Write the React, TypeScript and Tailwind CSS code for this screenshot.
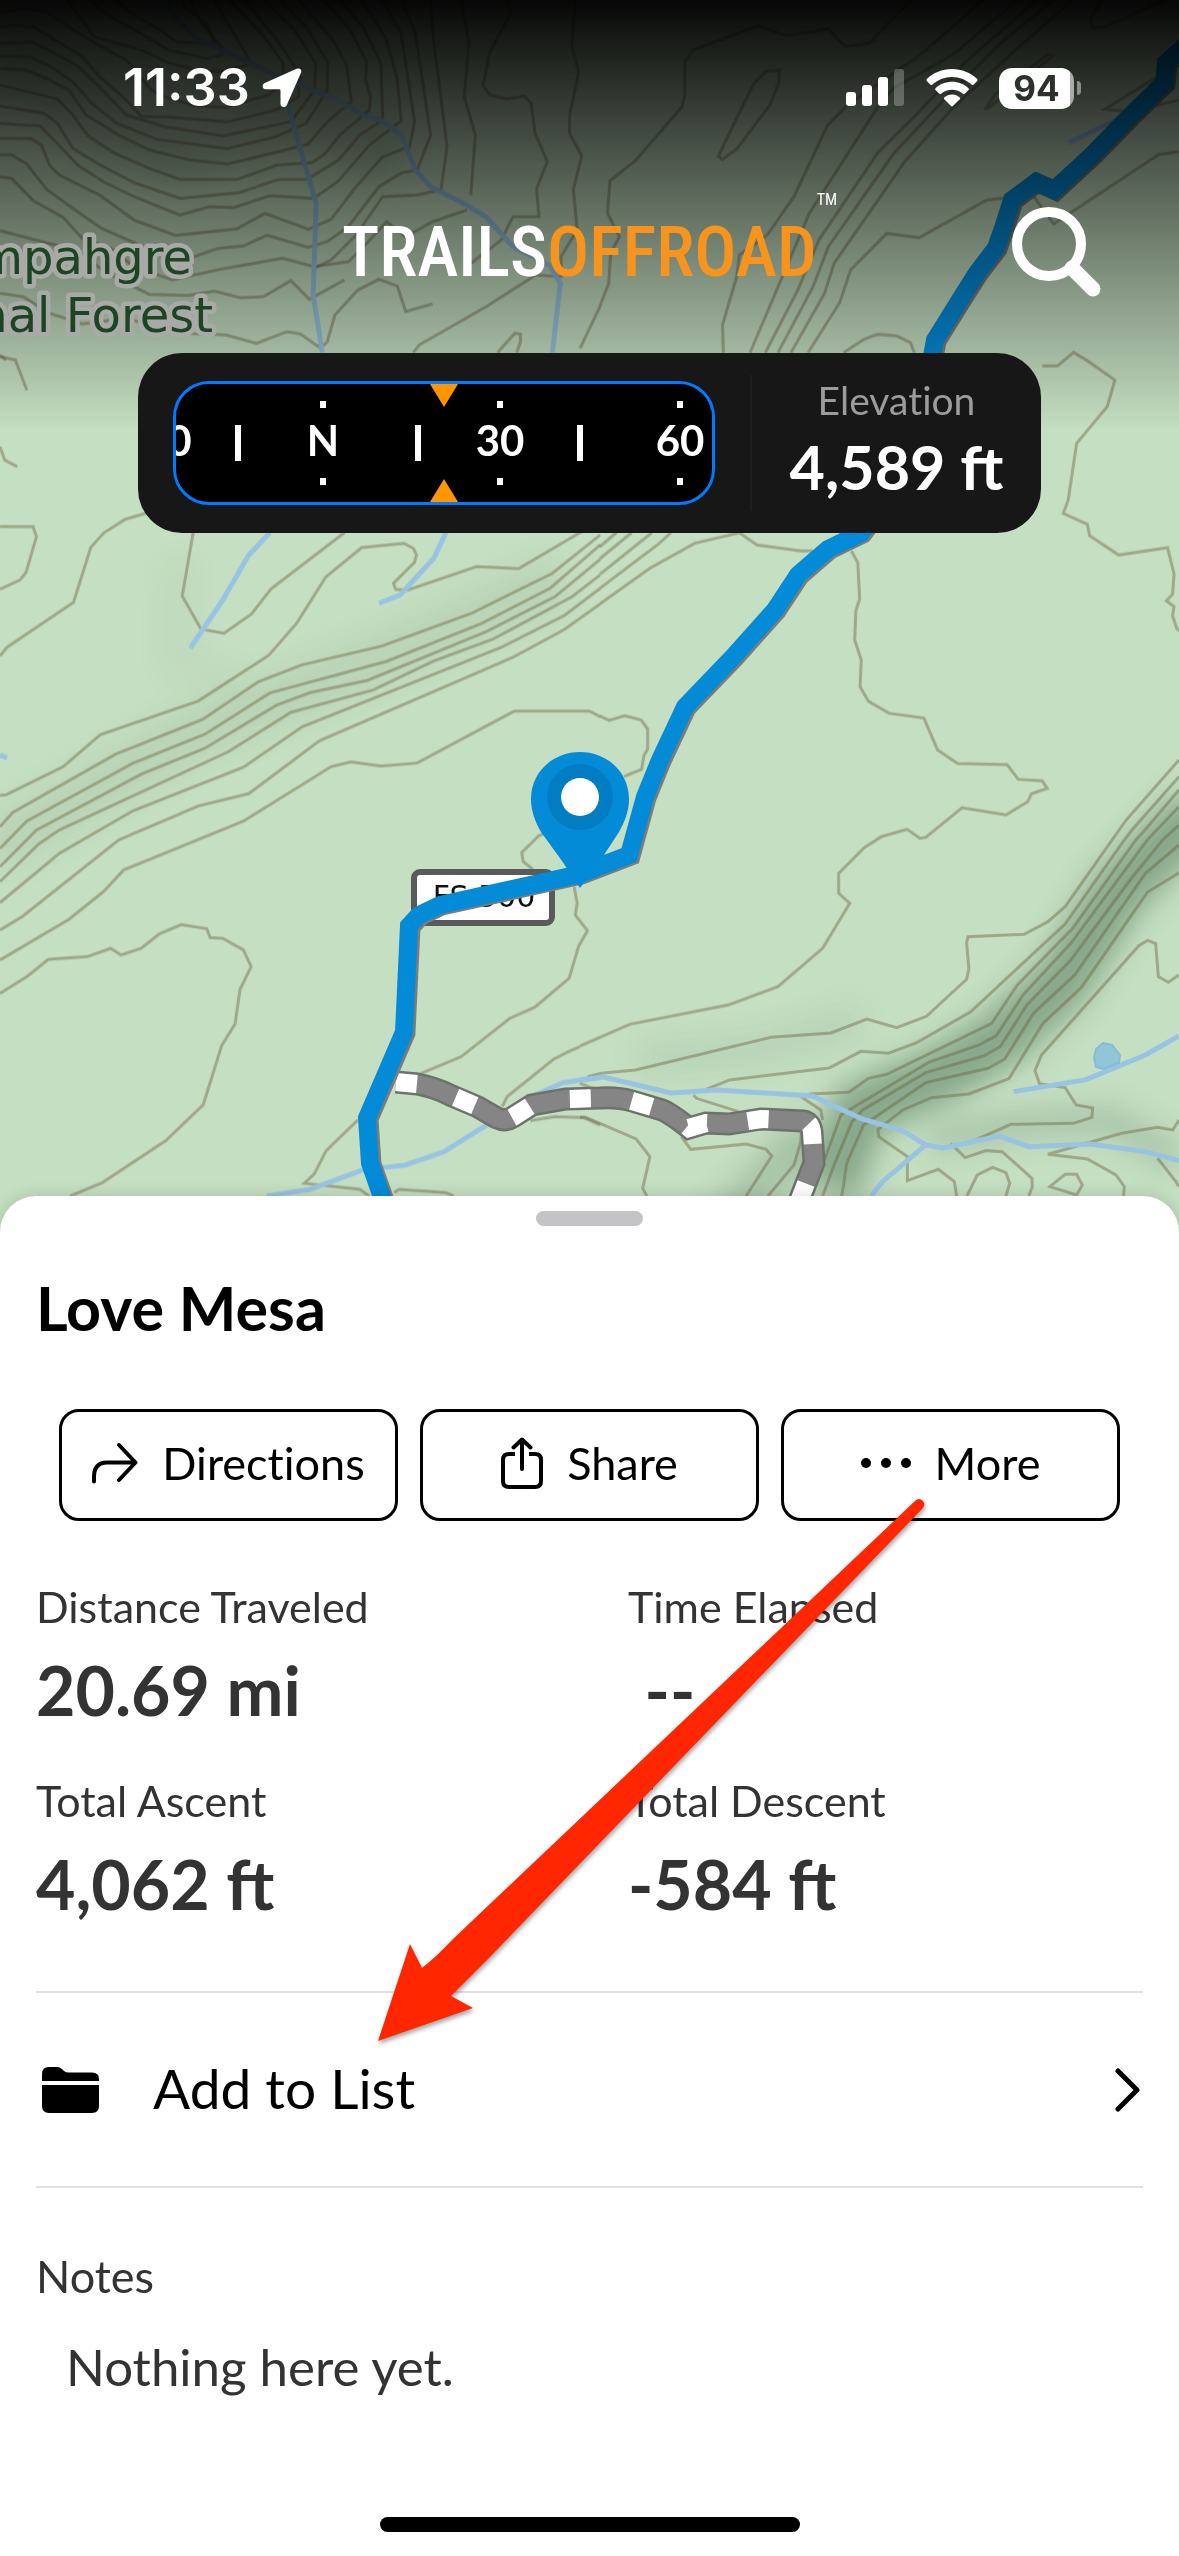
import type { ReactNode } from 'react';

const CONTOUR_TILES = [
  {
    transform: 'translate(0 0) scale(.3827 .3333)',
    contours: [
      'M300 0L345 40L425 95L460 125L560 130L540 70L480 20L475 0',
      'M235 0L280 45L375 105L440 150L540 175L580 165L585 150L520 60L500 0',
      'M175 0L205 45L245 110L370 150L440 188L520 212L580 214L645 195L652 180L600 80L560 0',
      'M0 38L60 25L120 35L185 85L250 130L330 180L395 270L430 290L510 318L590 322L700 285L740 250L740 190L690 110L600 0',
      'M0 80L35 75L85 80L130 110L215 170L260 230L330 300L370 350L430 350L595 366L720 330L780 290L782 220L730 130L640 0',
      'M0 130L80 125L135 155L205 200L250 250L330 345L430 380L583 408L760 365L822 270L825 190L770 90L690 0',
      'M0 168L75 170L125 195L190 245L240 310L305 370L410 418L593 446L720 410L800 370L855 270V185L800 80L730 0',
      'M0 205L70 210L130 240L180 270L225 345L310 405L390 450L495 480L594 492L745 450L805 432L855 365L918 305L905 195L870 120L780 0',
      'M0 255L90 280L150 297L190 345L230 408L300 460L390 505L470 538H620L725 495L815 488L850 460L888 405L965 330L968 290L955 240L958 185L915 90L845 0',
      'M0 318L115 340L150 370L190 445L265 497L350 548L470 595L625 578L728 538H802L885 480L940 405L1000 360L995 190L950 85L890 0',
      'M0 370L105 378L145 425L205 497L270 545L350 590L470 645L548 620L610 623L705 587L820 595L885 542L965 435L1048 362L1038 240L1010 120L945 0',
      'M0 415H80L108 435L130 497L155 525L260 585L350 660L458 706L618 687L692 640L806 688L865 658L930 560L1000 470L1070 440L1083 365L1048 100L1000 0',
      'M0 465H30L68 490L122 568L190 625L265 685L410 758L500 773L570 745L635 738L698 706L805 742L855 725L910 680L990 560L1050 518L1090 510L1125 405L1105 250L1085 100L1050 0',
      'M0 530L30 535L88 603L165 652L215 715L290 745L350 800L450 840L575 808L738 775L820 800L910 785L950 740L1010 665L1060 710L1130 665L1220 630',
      'M0 692L200 752L280 820L390 883L490 886L560 874L628 893L688 890L760 842L808 898L900 840',
      'M838 1045L855 1025L875 945L935 870L990 838L1038 858L1060 935L1130 912',
      'M0 880L60 890L130 940L215 972L330 955L420 985L500 1000L590 1005L670 1030L750 995L785 1002L838 1045',
      'M1125 0L1133 120L1168 440L1152 570L1090 585L1000 590L930 705L865 780L820 805',
      'M1205 0L1225 130L1213 290L1242 405L1230 585',
      'M1325 0L1335 40L1280 155L1262 255L1280 285L1325 297L1370 288L1388 310L1398 400L1430 485L1402 565L1408 650L1340 650L1310 720L1225 795',
      'M1503 0L1494 140L1512 215L1488 345V400L1520 468L1498 568L1508 690L1466 770V830L1400 825L1270 920L1095 1035L1080 1058',
      'M1300 1058L1345 1000L1360 1003V1025L1350 1058',
      'M0 1065L15 1080',
    ],
    streams: [
      'M440 0L445 35L510 115L600 160L700 215L785 255L880 300L950 347L995 360L1050 408L1085 510L1125 560L1210 610L1270 650L1340 740L1435 795L1464 850L1443 1058',
      'M750 310L826 610L818 885L842 1058',
    ],
  },
  {
    transform: 'translate(580 0) scale(.382 .3333)',
    contours: [
      'M0 1045L50 925L75 850L80 760L103 710L72 640L78 543L145 482L267 320L274 285V187L295 150L467 77L540 107L650 86L695 140L757 130L865 0',
      'M362 470L378 430L455 250L486 214L521 210V245L497 315L410 447L373 478Z',
      'M375 1058L373 975L410 830L417 765L455 735L490 705L560 590L648 375L700 315L890 165L1055 0',
      'M445 1058L600 640L780 320L820 265L975 165L1145 0',
      'M485 1058L570 870L625 720L780 457L880 345L1010 185L1195 0',
      'M518 1058L610 860L650 740L820 462L960 290L1100 130L1240 0',
      'M552 1058L640 880L665 790L850 485L975 325L1130 160L1290 0',
      'M597 1058L680 907L708 810L803 700L888 713L1065 600L1185 585L1240 672L1515 463L1568 455',
      'M690 1058L743 1018L780 1003L830 1008L865 1028L875 1058',
      'M1062 325L1085 285L1225 163L1238 168L1165 235L1068 325Z',
      'M1365 0L1337 55L1342 85L1375 80L1530 0',
      'M1568 190L1373 328L1420 333L1470 328L1568 300',
      'M1210 1098H1250L1292 1057L1325 1080L1400 1140L1380 1220L1300 1330L1278 1500',
    ],
    streams: ['M1280 428L1430 345'],
  },
  {
    transform: 'translate(0 500) scale(.3827 .3333)',
    contours: [
      'M0 80H86L95 110L68 217L52 240L0 268',
      'M0 468L18 442L192 307L237 142L272 98L327 58L380 40',
      'M505 95L476 288L525 387L585 400L657 342L708 267L900 98',
      'M0 886L15 885L165 800L262 704L518 603L702 466L775 370L851 231L945 143L1055 130L1080 145L1088 165L1083 187L1028 250L1034 268L1065 270L1245 200L1355 206L1520 95',
      'M0 980L33 938L302 763L530 658L675 545L788 495L998 438L1232 340L1443 220L1568 105',
      'M0 1045L70 963L347 790L535 703L705 579L1010 484L1255 372L1437 265L1568 135',
      'M0 1100L95 990L370 822L535 745L722 616L810 578L960 541L1270 395L1450 290L1568 178',
      'M0 1145L100 1033L155 990L597 755L760 637L975 570L1133 483L1287 418L1495 290L1568 225',
      'M0 1208L155 1060L348 932L637 801L790 680L1310 442L1475 346L1568 265',
      'M0 1290L58 1250L310 1020L518 918L650 881L835 722L1340 472L1475 388L1568 312',
      'M0 1380L180 1258L270 1175L323 1110L635 964L865 800L917 786L995 798L1090 789L1344 633H1540L1568 650',
      'M1425 1000L1408 1007L1363 1058L1367 1085L1392 1108',
      'M0 -160L12 -120L45 -100M0 -430L40 -420L70 -330',
    ],
    streams: [
      'M705 98L648 168L582 300L497 445',
      'M1165 98L1133 175L1045 285L990 310',
      'M0 765L18 774',
    ],
  },
  {
    transform: 'translate(580 500) scale(.382 .3333)',
    contours: [
      'M52 140L95 98',
      'M52 176L135 98',
      'M52 223L188 98',
      'M52 265L205 132L238 98',
      'M52 312L182 205L300 130L417 98L463 135L578 153H610',
      'M710 153L727 187L732 297L722 332L719 420L736 480L733 560L755 604L809 640L900 654L936 750L988 790L1118 794L1147 838L1210 843L1223 865L1182 881L1172 905L1115 945L1000 923L905 1012L890 1015L856 988L789 1010L744 1043L677 1120V1180L706 1210L635 1345L518 1460L388 1515L130 1573L0 1638',
      'M52 648L76 661L117 647L160 660L177 687V747L167 767L161 808L115 830',
      'M1278 0L1265 40L1328 73L1334 107L1410 165L1538 143L1555 222L1551 283L1535 302L1555 320L1551 347L1562 385L1568 392',
    ],
    streams: [],
  },
  {
    transform: 'translate(0 840) scale(.3827 .3333)',
    contours: [
      'M0 460L72 408L126 358L228 350L289 325L316 345L369 325L416 282L473 254L540 266L549 293L582 295L636 330L656 380L627 448L614 552L579 617L531 794L433 902L267 1028L183 1068',
      'M1500 140L1508 190L1503 225L1535 272L1512 318L1487 415L1397 502L1332 535L1205 650L1095 703',
      'M1515 620L1490 632L1447 657L1325 770L1312 800',
      'M1385 842L1450 830L1525 833L1568 855',
      'M935 840L852 932L821 1002L795 1030L940 1048L965 1068',
      'M1030 1058L1042 1048L1165 1058L1185 1068',
      'M1515 730L1568 755',
    ],
    streams: ['M698 1068L810 1048L947 990L1060 975L1160 935L1390 770L1470 728L1568 712'],
  },
  {
    transform: 'translate(580 840) scale(.382 .3333)',
    contours: [
      'M1568 -240L1430 -60L1270 200L1225 245L1163 283L1016 290L1012 308L1018 387L1012 418L907 529L829 563L751 537L657 579L500 592L145 690L55 700L20 710',
      'M1568 -190L1445 -30L1425 0L1270 252L1022 516L880 609L807 640L735 634L652 684L392 720L330 748',
      'M1568 -150L1475 -25L1455 0L1290 265L1145 435L1078 550L803 703L755 715L704 757L600 762',
      'M1568 -100L1485 0L1285 310L1160 465L1090 587L1045 615L913 667L712 805L683 825L640 960',
      'M1568 -45L1525 0L1440 120L1285 360L1170 495L1100 620L1057 648L905 698L740 810L712 845L667 970L635 1068',
      'M1568 15L1480 100L1295 405L1187 520L1112 657L1068 685L905 728L742 855L698 970L690 1035L685 1068',
      'M1568 98L1485 157L1312 443L1212 550L1123 716L1018 762L920 773L845 810L780 868L782 890L857 950V1022L938 988L980 1025L986 1068',
      'M1568 405L1540 427L1514 410L1507 311L1486 301L1463 317L1208 645L1191 692L1203 731L1270 743L1299 795L1342 804L1340 832L1292 850L1128 853L1020 908',
      'M970 910L1008 953L1063 932L1105 935L1183 1015L1184 1040L1175 1068',
      'M1013 1068L1040 1005L1080 982L1115 998L1125 1030L1115 1068',
      'M1230 1040L1270 1003H1300L1315 1035L1300 1065Z',
      'M1568 840L1552 870L1511 862L1418 880L1225 943L1328 957L1403 1005L1425 1040L1423 1068',
      'M1512 955L1560 1025L1568 1040',
      'M297 765L305 775L415 815',
      'M575 767L630 810L635 840',
      'M0 832H15L147 897L183 950L164 1045L175 1068',
      'M265 890L290 928L435 912L487 928L502 948L435 1068',
      'M580 870L578 905L560 975L492 1068',
    ],
    streams: [
      'M0 720L62 711L238 759L358 750L608 768L735 835L845 873L905 915L950 924L1097 888L1175 920L1335 912L1480 935L1568 962',
      'M905 915L792 1025L762 1068',
      'M1135 755L1325 719L1480 645L1568 588',
    ],
  },
];

const ROUTE =
  'M1185 46L1166 63L1164 83L1130 116L1092 155L1054 190L1036 182L1012 200L1003 228L996 248L977 273L958 303L935 340L932 356L900 480L861 533L828 549L798 575L775 610L733 657L685 707L660 760L645 797L629 855L580 874L440 905L419 915L409 926L404 1032L367 1118L370 1163L383 1200';

const TRACK =
  'M396 1082L417 1084Q434 1087 450 1095L478 1107L497 1118Q505 1122 513 1117L532 1105L566 1099L600 1098Q618 1097 632 1101L662 1110Q670 1113 689 1128L706 1123L729 1124L761 1119L803 1121Q811 1122 812 1132L814 1163L798 1204';

/** Topographic map with the recorded route, side track and waypoint */
const TrailMap = () => (
  <svg
    className="absolute inset-x-0 top-0 h-[1260px] w-full"
    viewBox="0 0 1179 1260"
    preserveAspectRatio="xMidYMin slice"
    fill="none"
    role="img"
    aria-label="Trail map"
  >
    <defs>
      <filter id="soft" x="-20%" y="-20%" width="140%" height="140%">
        <feGaussianBlur stdDeviation="14" />
      </filter>
      <linearGradient id="shade" x1="0" y1="0" x2="0" y2="1">
        <stop offset="0" stopColor="#000" stopOpacity=".97" />
        <stop offset="1" stopColor="#000" stopOpacity="0" />
      </linearGradient>
    </defs>
    <rect width="1179" height="1260" fill="#c5dfc2" />

    {/* Hill shading */}
    <g filter="url(#soft)" stroke="#4c6f52">
      <path d="M1200 810L1120 890L1060 985L1000 1040L940 1075L860 1110L830 1190" strokeWidth="56" opacity=".5" />
      <path d="M640 1060L760 1050L860 1020" strokeWidth="26" opacity=".12" />
      <path d="M930 1140L1020 1125L1110 1120L1179 1160" strokeWidth="26" opacity=".25" />
      <path d="M720 1230L810 1130" strokeWidth="40" opacity=".25" />
      <path d="M-10 850L200 730L380 660L560 580" strokeWidth="50" opacity=".1" />
      <path d="M0 60L180 150L300 100L400 160" strokeWidth="70" opacity=".15" />
      <path d="M180 560L175 660L240 690" strokeWidth="24" opacity=".05" />
    </g>

    {CONTOUR_TILES.map((tile) => (
      <g key={tile.transform} transform={tile.transform}>
        {tile.contours.map((d) => (
          <path key={d} d={d} stroke="#6b5f3c" strokeOpacity=".42" strokeWidth="3" vectorEffect="non-scaling-stroke" />
        ))}
        {tile.streams.map((d) => (
          <path key={d} d={d} stroke="#98c3e2" strokeWidth="5" vectorEffect="non-scaling-stroke" />
        ))}
      </g>
    ))}
    <path
      d="M1103 1043L1112 1045L1120 1055L1119 1063L1103 1069L1096 1067L1094 1058L1096 1049Z"
      fill="#91c6d8"
      stroke="#84bdd8"
      strokeWidth="2"
    />

    {/* Side track */}
    <path d={TRACK} stroke="#6b736b" strokeWidth="23" />
    <path d={TRACK} stroke="#858585" strokeWidth="18" />
    <path d={TRACK} stroke="#fff" strokeWidth="18" strokeDasharray="21 41" />

    {/* Road shield */}
    <rect x="414" y="872" width="138" height="51" rx="6" fill="#fff" stroke="#5a5a5a" strokeWidth="6" />
    <text x="484" y="907" fill="#111" textAnchor="middle" fontFamily="'DejaVu Sans', sans-serif" fontSize="30">
      FS 500
    </text>

    <path d={ROUTE} stroke="#7b7d78" strokeWidth="19" transform="translate(2 1)" />
    <path d={ROUTE} stroke="#038bd8" strokeWidth="18" />

    {/* Waypoint pin */}
    <path
      d="M580 752C607 752 629 772 629 799C629 811 625 821 619 832L600 861L580 888L562 861L541 832C535 821 531 811 531 799C531 772 553 752 580 752Z"
      fill="#038bd8"
    />
    <circle cx="580" cy="797" r="33" fill="#027cc2" />
    <circle cx="580" cy="797" r="19" fill="#fff" />

    <rect width="1179" height="430" fill="url(#shade)" />

    {/* Place name */}
    <g
      fill="#1d4523"
      stroke="#a9aaa8"
      strokeWidth="9"
      strokeLinejoin="round"
      paintOrder="stroke"
      textAnchor="end"
      fontFamily="'DejaVu Sans', sans-serif"
      fontSize="48"
    >
      <text x="192" y="274">Uncompahgre</text>
      <text x="213" y="332">National Forest</text>
    </g>
  </svg>
);

const StatusBar = () => (
  <div className="flex h-14 items-center justify-between pr-[98px] pl-[123px] text-white">
    <div className="flex items-center gap-3">
      <span className="font-['Inter',sans-serif] text-[52px] leading-14 font-semibold">11:33</span>
      <svg className="h-10 w-10" viewBox="0 0 40 40" fill="currentColor" aria-hidden="true">
        <path d="M34.600 .8C37.800-.6 40.300 1.800 39 4.800L24.800 37C23.400 40.300 18.500 39.500 18.500 35.700V22.500Q18.500 21.300 17.300 21.300H4C.2 21.300-.6 16.600 2.800 15.100Z" />
      </svg>
    </div>
    <div className="flex items-center gap-[21px]">
      <svg className="h-[38px] w-[59px]" viewBox="0 0 59 38" fill="currentColor" aria-label="Signal">
        <rect y="23" width="10" height="14" rx="3" />
        <rect x="16" y="16" width="10" height="21" rx="3" />
        <rect x="32" y="8" width="10" height="29" rx="3" />
        <rect x="48" width="10" height="37" rx="3" opacity=".25" />
      </svg>
      <svg className="h-[38px] w-[52px]" viewBox="0 0 52 38" fill="currentColor" aria-label="Wi-Fi">
        <path d="M26 0C35.800 0 44.600 3.800 51.200 10Q52 11 51.200 12L47.500 15.700Q46.600 16.500 45.700 15.700C40.500 10.900 33.600 8 26 8S11.500 10.900 6.300 15.700Q5.400 16.500 4.500 15.700L.8 12Q0 11 .8 10C7.400 3.800 16.200 0 26 0Z" />
        <path d="M26 12.800C32.400 12.800 38.200 15.200 42.500 19.200Q43.400 20.200 42.500 21.100L38.700 24.800Q37.800 25.600 36.900 24.800C34 22.300 30.200 20.800 26 20.800S18 22.300 15.100 24.800Q14.200 25.600 13.300 24.800L9.500 21.100Q8.600 20.200 9.500 19.200C13.800 15.200 19.600 12.800 26 12.800Z" />
        <path d="M26 25.600C29 25.600 31.600 26.700 33.700 28.500Q34.600 29.400 33.700 30.300L26.900 37Q26 37.800 25.100 37L18.300 30.300Q17.400 29.400 18.300 28.500C20.400 26.700 23 25.600 26 25.600Z" />
      </svg>
      <div className="flex items-center gap-[3px]">
        <span className="flex h-[41px] w-[75px] items-center justify-center rounded-[13px] bg-white bg-linear-to-r from-white from-95% to-[#a9aca8] to-95% font-['Inter',sans-serif] text-[35px] leading-10 font-bold text-[#2b312b]">
          94
        </span>
        <span className="h-3.5 w-1 rounded-r-full bg-[#8b908b]" />
      </div>
    </div>
  </div>
);

const Brand = () => (
  <h1 className="flex items-start font-['Roboto_Condensed','Liberation_Sans_Narrow','DejaVu_Sans_Condensed',sans-serif] text-[70px] leading-28 font-medium text-white">
    <span>TRAILS</span>
    <span className="text-[#f7941e]">OFFROAD</span>
    <sup className="text-base leading-6 font-normal">TM</sup>
  </h1>
);

const COMPASS_MARKS = [
  { label: '330', x: -21 },
  { label: 'N', x: 147 },
  { label: '30', x: 324 },
  { label: '60', x: 504 },
];

const Compass = () => (
  <div className="h-[124px] flex-1 overflow-hidden rounded-[36px] border-[3px] border-[#007aff] bg-black">
    <svg className="h-full w-full" viewBox="0 0 536 118" preserveAspectRatio="xMidYMid slice" role="img" aria-label="Compass">
      <g fill="#fff" textAnchor="middle" fontFamily="Lato, sans-serif" fontWeight="700" fontSize="42">
        {COMPASS_MARKS.map(({ label, x }) => (
          <g key={label}>
            <rect x={x - 3} y="17" width="6" height="7" />
            <text x={x} y="72">
              {label}
            </text>
            <rect x={x - 3} y="94" width="6" height="7" />
          </g>
        ))}
        {[62, 242, 404].map((x) => (
          <rect key={x} x={x - 3} y="41" width="6" height="36" />
        ))}
      </g>
      <path d="M254 0H282L268 23ZM254 118H282L268 95Z" fill="#ff9500" />
    </svg>
  </div>
);

const InstrumentCard = () => (
  <section className="mx-[138px] mt-[45px] flex h-[180px] items-center rounded-[44px] bg-[#171717] pl-[35px]">
    <Compass />
    <div className="ml-[35px] flex h-[136px] w-[291px] flex-col items-center justify-center border-l-2 border-[#1e1e1e]">
      <span className="text-[39px] leading-12 text-[#9c9c9c] [font-variant-ligatures:none]">Elevation</span>
      <span className="text-[61px] leading-[86px] font-bold text-white">4,589 ft</span>
    </div>
  </section>
);

const ActionButton = ({ icon, label }: { icon: ReactNode; label: string }) => (
  <button
    type="button"
    className="flex h-28 items-center justify-center gap-6 rounded-[20px] border-[3px] border-black pb-1 text-[45px] leading-14 [font-variant-ligatures:none]"
  >
    {icon}
    {label}
  </button>
);

const DirectionsIcon = () => (
  <svg className="h-[42px] w-[46px]" viewBox="0 0 46 42" fill="none" stroke="currentColor" strokeWidth="4" strokeLinecap="round" strokeLinejoin="round" aria-hidden="true">
    <path d="M2 39.500V35Q2 20.500 15 20.500H43M27 3L43.500 20.500L27 38" />
  </svg>
);

const ShareIcon = () => (
  <svg className="h-[52px] w-[42px]" viewBox="0 0 42 52" fill="none" stroke="currentColor" strokeWidth="4" strokeLinecap="round" strokeLinejoin="round" aria-hidden="true">
    <path d="M14 17H8Q2 17 2 23V44Q2 50 8 50H34Q40 50 40 44V23Q40 17 34 17H28" strokeLinecap="butt" />
    <path d="M21 32V2.500M12.500 10.500L21 2.500L29.500 10.500" />
  </svg>
);

const MoreIcon = () => (
  <svg className="h-3 w-[50px]" viewBox="0 0 50 12" fill="currentColor" aria-hidden="true">
    <circle cx="5" cy="6" r="5" />
    <circle cx="25" cy="6" r="5" />
    <circle cx="45" cy="6" r="5" />
  </svg>
);

const STATS = [
  { label: 'Distance Traveled', value: '20.69 mi' },
  { label: 'Time Elapsed', value: '\u00a0--' },
  { label: 'Total Ascent', value: '4,062 ft' },
  { label: 'Total Descent', value: '-584 ft' },
];

/** Red pointer laid over the sheet */
const Pointer = () => (
  <svg
    className="pointer-events-none absolute top-[296px] left-[370px] h-[560px] w-[566px] drop-shadow-[1px_3px_2px_rgba(0,0,0,0.35)]"
    viewBox="370 1492 566 560"
    fill="#ff2600"
    aria-hidden="true"
  >
    <path d="M378 2041L410 1944L422 1968Q436 1957 452 1940L915 1501Q919 1497 923 1501Q926 1505 922 1509L487 1960L451 1996L473 2008Z" />
  </svg>
);

export default function App() {
  return (
    <main className="relative flex min-h-screen flex-col overflow-hidden bg-white font-['Lato',sans-serif]">
      <TrailMap />

      <header className="relative pt-[60px]">
        <StatusBar />
        <div className="mt-20 grid grid-cols-[1fr_auto_1fr] items-center px-[78px]">
          <span />
          <Brand />
          <button type="button" aria-label="Search" className="justify-self-end text-white">
            <svg className="h-[90px] w-[90px]" viewBox="0 0 90 90" fill="none" stroke="currentColor" aria-hidden="true">
              <circle cx="38" cy="37" r="32" strokeWidth="10" />
              <path d="M61 61L82 82" strokeWidth="15" strokeLinecap="round" />
            </svg>
          </button>
        </div>
        <InstrumentCard />
      </header>

      <section className="relative mt-auto rounded-t-[36px] bg-white px-9 pt-[15px] pb-6 shadow-[0_0_16px_rgba(0,0,0,0.15)]">
        <div className="mx-auto h-[15px] w-[107px] rounded-full bg-[#c4c4c6]" />
        <h2 className="mt-[46px] text-[61px] leading-[72px] font-bold">Love Mesa</h2>

        <div className="mt-[65px] grid grid-cols-3 gap-[22px] px-[23px]">
          <ActionButton icon={<DirectionsIcon />} label="Directions" />
          <ActionButton icon={<ShareIcon />} label="Share" />
          <ActionButton icon={<MoreIcon />} label="More" />
        </div>

        <dl className="mt-[58px] grid grid-cols-[592px_1fr] gap-y-[43px] text-[#333]">
          {STATS.map(({ label, value }) => (
            <div key={label}>
              <dt className="text-[43px] leading-14">{label}</dt>
              <dd className="mt-[15px] text-[68px] leading-20 font-bold">{value}</dd>
            </div>
          ))}
        </dl>

        <button
          type="button"
          className="mt-[67px] flex h-[197px] w-full items-center border-y-2 border-[#e0e0e2] text-[55px] leading-16"
        >
          <svg className="ml-1.5 h-[46px] w-[57px]" viewBox="0 0 57 46" fill="currentColor" aria-hidden="true">
            <path d="M0 14V7Q0 0 7 0H15Q18 0 20 2L22 4Q24 5.500 27 5.500H50Q57 5.500 57 12V14Z" />
            <path d="M0 18H57V39Q57 46 50 46H7Q0 46 0 39Z" />
          </svg>
          <span className="ml-[54px] pb-1">Add to List</span>
          <svg className="mr-[3px] ml-auto h-11 w-[25px]" viewBox="0 0 25 44" fill="none" stroke="currentColor" strokeWidth="5" strokeLinecap="round" strokeLinejoin="round" aria-hidden="true">
            <path d="M3 3L22 22L3 41" />
          </svg>
        </button>

        <h3 className="mt-[60px] text-[45px] leading-14 text-[#333]">Notes</h3>
        <p className="mt-[31px] pl-[30px] text-[51px] leading-16 text-[#333]">Nothing here yet.</p>
        <div className="mx-auto mt-[118px] h-[15px] w-[420px] rounded-full bg-black" />

        <Pointer />
      </section>
    </main>
  );
}
